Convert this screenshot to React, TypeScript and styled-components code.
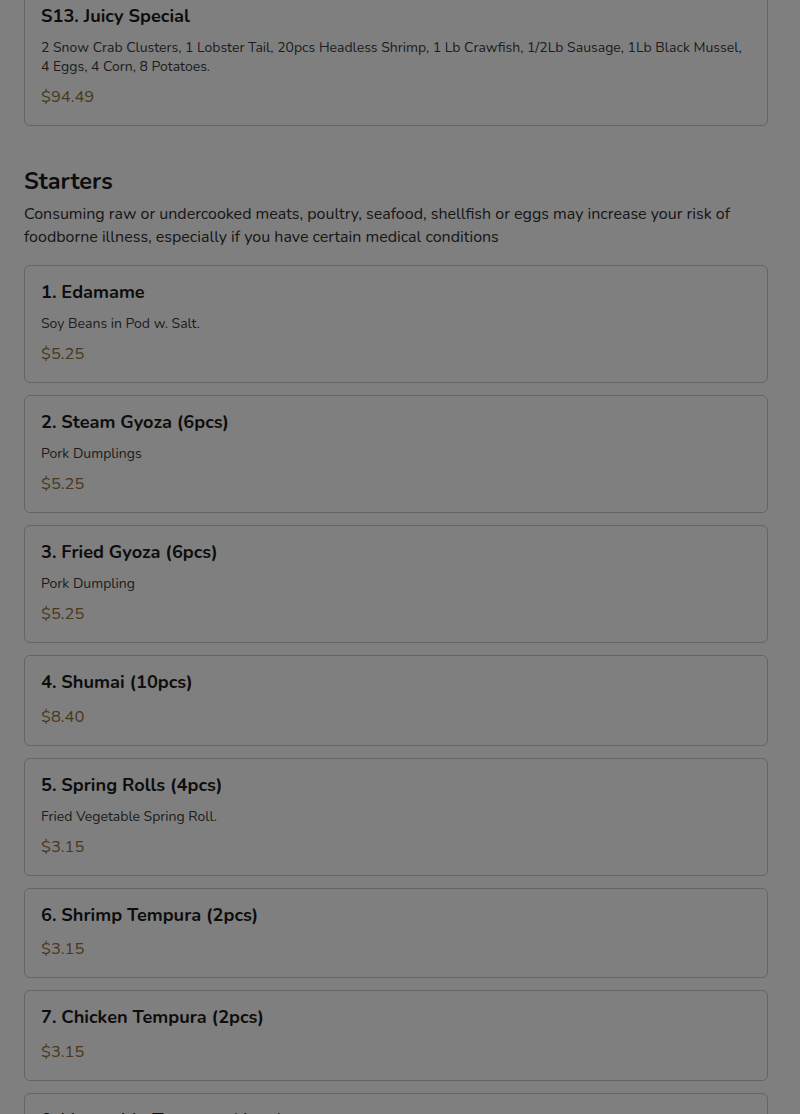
import React from "react";
import styled, { createGlobalStyle } from "styled-components";

const GlobalStyle = createGlobalStyle`
  html, body { margin: 0; padding: 0; background: #ffffff; }
  body { font-family: Nunito, Lato, "Noto Sans", sans-serif; color: #222; }
  * { box-sizing: border-box; }
`;

type Item = { name: string; desc?: string; price: string };

const starters: Item[] = [
  { name: "1. Edamame", desc: "Soy Beans in Pod w. Salt.", price: "$5.25" },
  { name: "2. Steam Gyoza (6pcs)", desc: "Pork Dumplings", price: "$5.25" },
  { name: "3. Fried Gyoza (6pcs)", desc: "Pork Dumpling", price: "$5.25" },
  { name: "4. Shumai (10pcs)", price: "$8.40" },
  { name: "5. Spring Rolls (4pcs)", desc: "Fried Vegetable Spring Roll.", price: "$3.15" },
  { name: "6. Shrimp Tempura (2pcs)", price: "$3.15" },
  { name: "7. Chicken Tempura (2pcs)", price: "$3.15" },
  { name: "8. Vegetable Tempura (4pcs)", desc: "Assorted Vegetables.", price: "$3.15" },
];

const Page = styled.div`
  padding: 0 32px 40px 24px;
  margin-top: -11px;
`;

const Section = styled.section<{ $first?: boolean }>`
  margin-top: ${(p) => (p.$first ? "0" : "40px")};
`;

const SectionTitle = styled.h2`
  margin: 0;
  font-size: 23.5px;
  line-height: 30px;
  font-weight: 700;
  color: #1a1a1a;
`;

const SectionNote = styled.p`
  margin: 7px 0 16px;
  font-size: 16px;
  line-height: 23px;
  color: #2e2e2e;
`;

const List = styled.div`
  display: flex;
  flex-direction: column;
  gap: 12px;
`;

const Card = styled.div`
  background: #fff;
  border: 1px solid #c8c8c8;
  border-radius: 6px;
  padding: 15px 16px 17px;
  display: flex;
  flex-direction: column;
`;

const Name = styled.div`
  font-size: 18.2px;
  line-height: 22px;
  font-weight: 700;
  color: #1a1a1a;
`;

const Desc = styled.div`
  margin-top: 11px;
  font-size: 14px;
  line-height: 19px;
  color: #3a3a3a;
`;

const Price = styled.div<{ $tight?: boolean }>`
  margin-top: ${(p) => (p.$tight ? "10px" : "12.5px")};
  font-size: 16.5px;
  line-height: 22px;
  color: #94723c;
`;

const Overlay = styled.div`
  position: fixed;
  inset: 0;
  background: rgba(0, 0, 0, 0.5);
  pointer-events: none;
`;

function MenuCard({ item }: { item: Item }) {
  return (
    <Card>
      <Name>{item.name}</Name>
      {item.desc && <Desc>{item.desc}</Desc>}
      <Price $tight={!!item.desc}>{item.price}</Price>
    </Card>
  );
}

export default function App() {
  return (
    <>
      <GlobalStyle />
      <Page>
        <Section $first>
          <List>
            <MenuCard
              item={{
                name: "S13. Juicy Special",
                desc:
                  "2 Snow Crab Clusters, 1 Lobster Tail, 20pcs Headless Shrimp, 1 Lb Crawfish, 1/2Lb Sausage, 1Lb Black Mussel, 4 Eggs, 4 Corn, 8 Potatoes.",
                price: "$94.49",
              }}
            />
          </List>
        </Section>
        <Section>
          <SectionTitle>Starters</SectionTitle>
          <SectionNote>
            Consuming raw or undercooked meats, poultry, seafood, shellfish or eggs may increase your risk of
            foodborne illness, especially if you have certain medical conditions
          </SectionNote>
          <List>
            {starters.map((s) => (
              <MenuCard key={s.name} item={s} />
            ))}
          </List>
        </Section>
      </Page>
      <Overlay />
    </>
  );
}
